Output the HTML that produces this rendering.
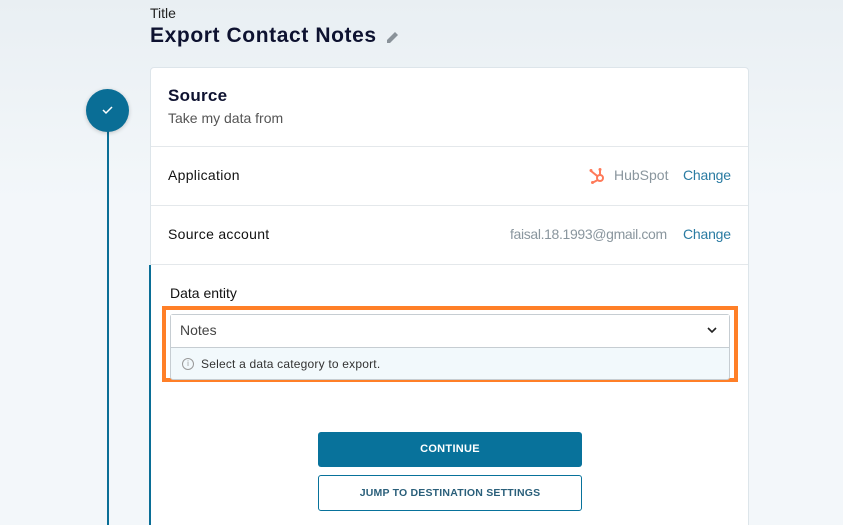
<!DOCTYPE html>
<html><head><style>
html,body{margin:0;width:843px;height:525px;overflow:hidden}
body{background:linear-gradient(#e9eff3,#f3f7fa 200px,#f3f7fa);font-family:"Liberation Sans",sans-serif;position:relative}
.a{position:absolute}
</style></head><body>
<div class="a" style="left:150px;top:5px;font-size:14px;color:#222">Title</div>
<div class="a" style="left:150px;top:24px;font-size:21px;font-weight:bold;color:#0e1230;letter-spacing:0.6px">Export Contact Notes</div>
<svg class="a" style="left:386px;top:30px" width="14" height="14" viewBox="0 0 14 14"><path d="M1 13 L1 10 L9 2 L12 5 L4 13 Z" fill="#8a9299"/></svg>
<div class="a" style="left:107px;top:120px;width:2px;height:405px;background:#0a6e96"></div>
<div class="a" style="left:86px;top:89px;width:43px;height:43px;border-radius:50%;background:#0a6e96;box-shadow:0 1px 4px rgba(0,0,0,.2)"></div>
<svg class="a" style="left:101px;top:104px" width="13" height="12"><path d="M2 6 L5 9 L11 3" stroke="#fff" stroke-width="1.5" fill="none"/></svg>
<div class="a" style="left:150px;top:67px;width:597px;height:470px;background:#fff;border:1px solid #dde5ea;border-radius:4px"></div>
<div class="a" style="left:149px;top:265px;width:2px;height:260px;background:#0a6e96"></div>
<div class="a" style="left:168px;top:86px;font-size:17px;font-weight:bold;color:#0e1230;letter-spacing:0.3px">Source</div>
<div class="a" style="left:168px;top:110px;font-size:14px;color:#555">Take my data from</div>
<div class="a" style="left:151px;top:146px;width:597px;height:1px;background:#e4e8eb"></div>
<div class="a" style="left:168px;top:167px;font-size:14px;color:#111;letter-spacing:0.3px">Application</div>
<svg class="a" style="left:589px;top:167px" width="17" height="17" viewBox="0 0 17 17"><g stroke="#ff7a59" stroke-width="2" fill="none"><circle cx="11" cy="11" r="3"/><path d="M11 8 V3 M8.7 13 L4 15.5 M8.6 9.3 L2 4"/></g><circle cx="11" cy="2.5" r="1.5" fill="#ff7a59"/><circle cx="2" cy="3.5" r="1.5" fill="#ff7a59"/><circle cx="3.5" cy="15.5" r="1.5" fill="#ff7a59"/></svg>
<div class="a" style="left:614px;top:167px;font-size:14px;color:#8a969e">HubSpot</div>
<div class="a" style="left:683px;top:167px;font-size:14px;color:#2a7ba2;letter-spacing:-0.2px">Change</div>
<div class="a" style="left:151px;top:205px;width:597px;height:1px;background:#e4e8eb"></div>
<div class="a" style="left:168px;top:226px;font-size:14px;color:#111;letter-spacing:0.3px">Source account</div>
<div class="a" style="left:510px;top:226px;font-size:14px;color:#8a969e;letter-spacing:-0.35px">faisal.18.1993@gmail.com</div>
<div class="a" style="left:683px;top:226px;font-size:14px;color:#2a7ba2;letter-spacing:-0.2px">Change</div>
<div class="a" style="left:151px;top:264px;width:597px;height:1px;background:#e4e8eb"></div>
<div class="a" style="left:170px;top:285px;font-size:14px;color:#111">Data entity</div>
<div class="a" style="left:162px;top:306px;width:568px;height:68px;border:4px solid #ff7f27"></div>
<div class="a" style="left:170px;top:314px;width:558px;height:64px;border:1px solid #c6cdd2;border-radius:3px;background:#f2f9fc"></div>
<div class="a" style="left:171px;top:315px;width:558px;height:32px;background:#fff;border-bottom:1px solid #c6cdd2"></div>
<div class="a" style="left:180px;top:322px;font-size:14px;color:#444">Notes</div>
<svg class="a" style="left:707px;top:327px" width="10" height="7"><path d="M1 1 L5 5 L9 1" stroke="#222" stroke-width="1.6" fill="none"/></svg>
<div class="a" style="left:182px;top:358px;width:10px;height:10px;border:1px solid #999;border-radius:50%;font-size:8px;line-height:10px;text-align:center;color:#999">i</div>
<div class="a" style="left:201px;top:357px;font-size:12px;color:#333;letter-spacing:0.2px">Select a data category to export.</div>
<div class="a" style="left:318px;top:432px;width:264px;height:35px;background:#08729b;border-radius:3px;color:#fff;font-size:11px;font-weight:bold;text-align:center;line-height:35px;letter-spacing:0.3px">CONTINUE</div>
<div class="a" style="left:318px;top:475px;width:262px;height:34px;border:1px solid #08729b;border-radius:3px;color:#2a5f7a;font-size:10.5px;font-weight:bold;text-align:center;line-height:34px;background:#fff;letter-spacing:0.2px">JUMP TO DESTINATION SETTINGS</div>
</body></html>
